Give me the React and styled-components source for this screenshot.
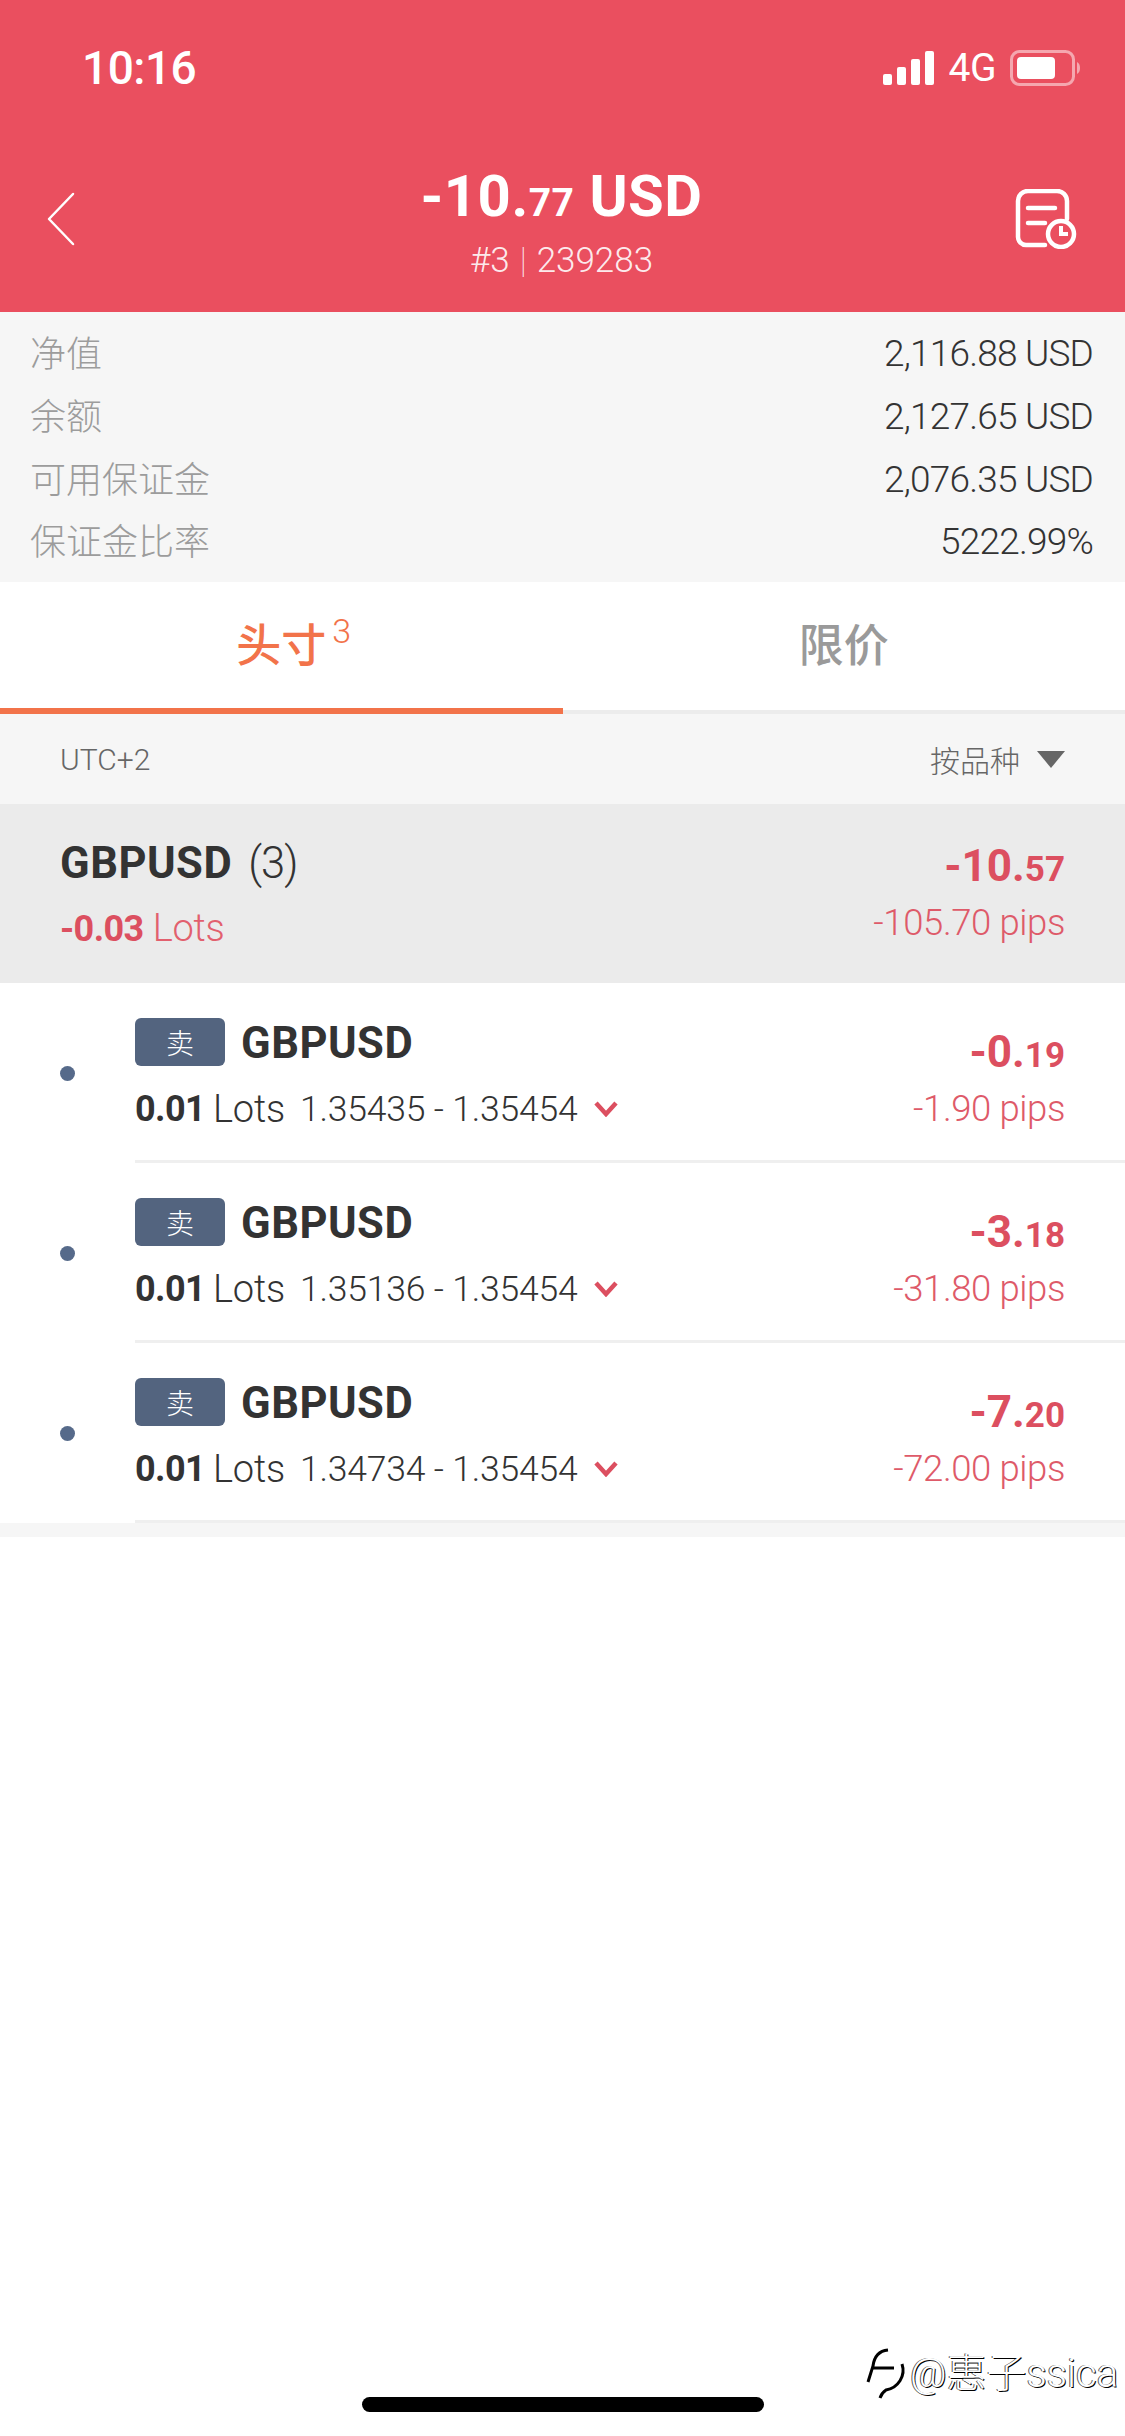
import React from 'react';
import styled, { createGlobalStyle } from 'styled-components';

const GlobalStyle = createGlobalStyle`
  html, body {
    margin: 0;
    padding: 0;
    background: #fff;
    font-family: Roboto, "Noto Sans CJK SC", sans-serif;
  }
  * {
    box-sizing: border-box;
  }
`;

const Page = styled.div`
  position: relative;
  width: 1125px;
  height: 2436px;
  overflow: hidden;
  background: #fff;
`;

const Header = styled.header`
  height: 312px;
  background: #ea4f5f;
  color: #fff;
`;

const StatusBar = styled.div`
  height: 136px;
  padding: 0 45px 0 82px;
  display: flex;
  align-items: center;
  justify-content: space-between;
`;

const Time = styled.span`
  font-size: 46px;
  font-weight: 500;
  letter-spacing: -0.5px;
`;

const StatusIcons = styled.div`
  display: flex;
  align-items: center;
  gap: 14px;
`;

const Network = styled.span`
  font-size: 39px;
  font-weight: 400;
  letter-spacing: -0.5px;
`;

const NavBar = styled.div`
  height: 166px;
  padding: 0 48px 0 46px;
  display: grid;
  grid-template-columns: 100px 1fr 100px;
  align-items: center;
`;

const NavRight = styled.div`
  display: flex;
  justify-content: flex-end;
`;

const TitleBlock = styled.div`
  text-align: center;
  margin-top: 4px;
`;

const Title = styled.div`
  font-size: 58px;
  line-height: 72px;
  font-weight: 700;
  letter-spacing: 0.5px;
  small {
    font-size: 39px;
    font-weight: 700;
  }
`;

const Subtitle = styled.div`
  font-size: 35px;
  line-height: 44px;
  font-weight: 300;
  color: rgba(255, 255, 255, 0.9);
  i {
    font-style: normal;
    margin: 0 10px;
    font-weight: 100;
  }
`;

const InfoPanel = styled.section`
  height: 270px;
  padding: 9px 32px 0 30px;
  background: #f6f6f6;
`;

const InfoRow = styled.div`
  height: 62.7px;
  display: flex;
  align-items: center;
  justify-content: space-between;
`;

const InfoLabel = styled.span`
  font-size: 36px;
  font-weight: 300;
  color: #9c9c9c;
  margin-top: -2px;
`;

const InfoValue = styled.span`
  font-size: 37px;
  font-weight: 300;
  color: #333;
  letter-spacing: -0.8px;
  margin-top: 3px;
`;

const Tabs = styled.nav`
  height: 132px;
  display: flex;
  background: #fff;
`;

const Tab = styled.div`
  width: 50%;
  height: 132px;
  padding-top: 30px;
  display: flex;
  justify-content: center;
  font-size: 45px;
  line-height: 70px;
  font-weight: 500;
  color: ${({ $active }) => ($active ? '#f2734a' : '#9a9a9a')};
  border-bottom: ${({ $active }) => ($active ? '6px solid #f2734a' : '4px solid #ececec')};
`;

const TabLabel = styled.span`
  position: relative;
`;

const TabCount = styled.sup`
  position: absolute;
  left: 100%;
  top: -3px;
  margin-left: 6px;
  font-size: 34px;
  line-height: 44px;
  font-weight: 300;
  vertical-align: baseline;
`;

const FilterBar = styled.div`
  height: 90px;
  padding: 0 60px;
  display: flex;
  align-items: center;
  justify-content: space-between;
  background: #f6f6f6;
  color: #666;
  font-size: 30px;
  font-weight: 300;
`;

const Sorter = styled.div`
  display: flex;
  align-items: center;
  gap: 17px;
`;

const Caret = styled.span`
  width: 0;
  height: 0;
  border-left: 14px solid transparent;
  border-right: 14px solid transparent;
  border-top: 17px solid #666;
`;

const GroupRow = styled.div`
  height: 179px;
  padding: 0 60px;
  display: flex;
  justify-content: space-between;
  background: #ebebeb;
`;

const Column = styled.div`
  display: flex;
  flex-direction: column;
  align-items: ${({ $end }) => ($end ? 'flex-end' : 'flex-start')};
`;

const GroupName = styled.div`
  margin-top: 32px;
  font-size: 43.5px;
  line-height: 56px;
  font-weight: 700;
  color: #333;
  letter-spacing: 0.5px;
`;

const GroupCount = styled.span`
  margin-left: 16px;
  font-weight: 300;
  letter-spacing: -1px;
`;

const GroupLots = styled.div`
  margin-top: 12px;
  font-size: 38px;
  line-height: 48px;
  font-weight: 300;
  color: #e2606e;
  letter-spacing: -0.2px;
  b {
    font-size: 36px;
    font-weight: 700;
    color: #dc4f60;
    letter-spacing: -0.6px;
  }
`;

const Profit = styled.div`
  margin-top: ${({ $top }) => $top}px;
  font-size: 44px;
  line-height: 56px;
  font-weight: 700;
  color: #dc4f60;
  small {
    font-size: 35px;
  }
`;

const Pips = styled.div`
  margin-top: ${({ $top }) => $top}px;
  font-size: 36.5px;
  line-height: 48px;
  font-weight: 300;
  color: #de5a69;
  letter-spacing: -0.4px;
`;

const OrderRow = styled.div`
  height: 180px;
  display: flex;
  background: #fff;
`;

const DotCell = styled.div`
  width: 135px;
  padding-left: 60px;
  padding-top: 83px;
`;

const Dot = styled.div`
  width: 15px;
  height: 15px;
  border-radius: 50%;
  background: #566a8a;
`;

const OrderBody = styled.div`
  flex: 1;
  padding: 35px 60px 0 0;
  display: flex;
  justify-content: space-between;
  border-bottom: 3px solid #efefef;
`;

const OrderHead = styled.div`
  height: 48px;
  display: flex;
  align-items: center;
  gap: 16px;
`;

const SideBadge = styled.span`
  width: 90px;
  height: 48px;
  display: flex;
  align-items: center;
  justify-content: center;
  border-radius: 6px;
  background: #53647f;
  color: #fff;
  font-size: 28px;
  font-weight: 300;
`;

const Symbol = styled.span`
  font-size: 43.5px;
  font-weight: 700;
  color: #333;
  letter-spacing: 0.5px;
  margin-top: 3px;
`;

const OrderMeta = styled.div`
  margin-top: 19px;
  display: flex;
  align-items: center;
  font-size: 38px;
  line-height: 48px;
  font-weight: 300;
  color: #333;
  letter-spacing: -0.2px;
  b {
    font-size: 36px;
    font-weight: 700;
    margin-right: 8px;
    letter-spacing: -0.6px;
  }
`;

const Prices = styled.span`
  margin-left: 15px;
  margin-right: 17px;
  font-size: 35.5px;
  letter-spacing: -0.2px;
`;

const ListEnd = styled.div`
  height: 14px;
  background: #f6f6f6;
`;

const HomeBar = styled.div`
  position: absolute;
  left: 362px;
  top: 2397px;
  width: 402px;
  height: 15px;
  border-radius: 8px;
  background: #000;
`;

const Watermark = styled.div`
  position: absolute;
  left: 866px;
  top: 2346px;
  display: flex;
  align-items: center;
  gap: 2px;
  font-size: 40px;
  line-height: 56px;
  font-weight: 300;
  color: #fff;
  text-shadow: 1px 1px 0 #000, -1px 0 0 #555;
  white-space: nowrap;
`;

const Signal = () => (
  <svg width="52" height="34" viewBox="0 0 52 34" fill="#fff">
    <rect x="0" y="23" width="9" height="11" rx="2" />
    <rect x="14" y="16" width="9" height="18" rx="2" />
    <rect x="28" y="8" width="9" height="26" rx="2" />
    <rect x="42" y="0" width="9" height="34" rx="2" />
  </svg>
);

const Battery = () => (
  <svg width="70" height="36" viewBox="0 0 70 36">
    <rect x="1.5" y="1.5" width="62" height="33" rx="8" fill="none" stroke="#fff" strokeOpacity="0.5" strokeWidth="3" />
    <rect x="7" y="7" width="38" height="22" rx="4" fill="#fff" />
    <path d="M67 12c2 1 3 3 3 6s-1 5-3 6z" fill="#fff" fillOpacity="0.5" />
  </svg>
);

const BackIcon = () => (
  <svg width="30" height="54" viewBox="0 0 30 54" fill="none" stroke="#fff" strokeWidth="2.5" strokeLinecap="round" strokeLinejoin="round">
    <path d="M27 2 3 27l24 25" />
  </svg>
);

const HistoryIcon = () => (
  <svg width="62" height="60" viewBox="0 0 62 60" fill="none" stroke="#fff" strokeWidth="4.5" strokeLinecap="round">
    <path d="M52 30V12A10 10 0 0 0 42 2H13A10 10 0 0 0 3 12v36a8 8 0 0 0 8 8h19" />
    <path d="M13 19h27M13 34h17" />
    <circle cx="46" cy="45" r="13" fill="#ea4f5f" />
    <path d="M46 37v8h7" strokeWidth="4" strokeLinecap="butt" />
  </svg>
);

const MiniChevron = () => (
  <svg width="24" height="16" viewBox="0 0 24 16" fill="none" stroke="#dc4f60" strokeWidth="4.5">
    <path d="M2 2l10 11L22 2" />
  </svg>
);

const WeiboMark = () => (
  <svg width="42" height="52" viewBox="0 0 42 52" fill="none" stroke="#000" strokeWidth="3">
    <path d="M22 2C12 3 8 10 7 18L2 34M6 20h22" />
    <path d="M36 16c4 12-4 24-16 26-3 2-5 5-6 8" />
  </svg>
);

const info = [
  ['净值', '2,116.88 USD'],
  ['余额', '2,127.65 USD'],
  ['可用保证金', '2,076.35 USD'],
  ['保证金比率', '5222.99%'],
];

const orders = [
  { open: '1.35435', whole: '-0.', cents: '19', pips: '-1.90 pips' },
  { open: '1.35136', whole: '-3.', cents: '18', pips: '-31.80 pips' },
  { open: '1.34734', whole: '-7.', cents: '20', pips: '-72.00 pips' },
];

export default function App() {
  return (
    <Page>
      <GlobalStyle />
      <Header>
        <StatusBar>
          <Time>10:16</Time>
          <StatusIcons>
            <Signal />
            <Network>4G</Network>
            <Battery />
          </StatusIcons>
        </StatusBar>
        <NavBar>
          <BackIcon />
          <TitleBlock>
            <Title>-10.<small>77</small> USD</Title>
            <Subtitle>#3<i>|</i>239283</Subtitle>
          </TitleBlock>
          <NavRight>
            <HistoryIcon />
          </NavRight>
        </NavBar>
      </Header>

      <InfoPanel>
        {info.map(([label, value]) => (
          <InfoRow key={label}>
            <InfoLabel>{label}</InfoLabel>
            <InfoValue>{value}</InfoValue>
          </InfoRow>
        ))}
      </InfoPanel>

      <Tabs>
        <Tab $active>
          <TabLabel>头寸<TabCount>3</TabCount></TabLabel>
        </Tab>
        <Tab>
          <TabLabel>限价</TabLabel>
        </Tab>
      </Tabs>

      <FilterBar>
        <span>UTC+2</span>
        <Sorter>
          <span>按品种</span>
          <Caret />
        </Sorter>
      </FilterBar>

      <GroupRow>
        <Column>
          <GroupName>GBPUSD<GroupCount>(3)</GroupCount></GroupName>
          <GroupLots><b>-0.03</b> Lots</GroupLots>
        </Column>
        <Column $end>
          <Profit $top={34}>-10.<small>57</small></Profit>
          <Pips $top={1}>-105.70 pips</Pips>
        </Column>
      </GroupRow>

      {orders.map((order) => (
        <OrderRow key={order.open}>
          <DotCell>
            <Dot />
          </DotCell>
          <OrderBody>
            <Column>
              <OrderHead>
                <SideBadge>卖</SideBadge>
                <Symbol>GBPUSD</Symbol>
              </OrderHead>
              <OrderMeta>
                <b>0.01</b>Lots
                <Prices>{order.open} - 1.35454</Prices>
                <MiniChevron />
              </OrderMeta>
            </Column>
            <Column $end>
              <Profit $top={6}>{order.whole}<small>{order.cents}</small></Profit>
              <Pips $top={1}>{order.pips}</Pips>
            </Column>
          </OrderBody>
        </OrderRow>
      ))}
      <ListEnd />

      <HomeBar />
      <Watermark>
        <WeiboMark />
        <span>@惠子ssica</span>
      </Watermark>
    </Page>
  );
}
